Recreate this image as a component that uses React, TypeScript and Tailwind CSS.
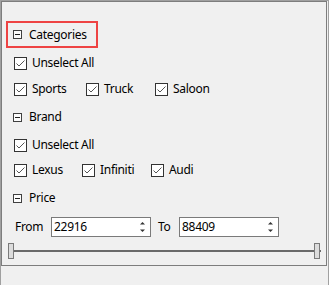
import React from "react";

const font = { fontFamily: '"Noto Sans", "Open Sans", sans-serif' };

function Minus() {
  return (
    <div className="w-[9px] h-[9px] border border-[#404040] bg-[#fcfcfc] flex items-center justify-center shrink-0">
      <div className="w-[5px] h-[1px] bg-[#202020]" />
    </div>
  );
}

function Check() {
  return (
    <div className="w-[13px] h-[13px] border border-[#333333] bg-white shrink-0 flex items-center justify-center">
      <svg width="11" height="11" viewBox="0 0 11 11">
        <path d="M1.5 5.5 L4 8 L9.5 2.5" stroke="#555" strokeWidth="1" fill="none" />
      </svg>
    </div>
  );
}

const txt = "text-[12px] leading-none text-black tracking-[-0.3px]";

function Header({ label, boxed, h }: { label: string; boxed?: boolean; h: string }) {
  return (
    <div className={`flex items-center ${h}`}>
      <div
        className={`ml-[4px] w-[92px] h-[27px] border-2 ${boxed ? "border-[#ee4343]" : "border-transparent"} flex items-center pl-[5px] gap-[7px]`}
      >
        <Minus />
        <span className={txt}>{label}</span>
      </div>
    </div>
  );
}

function Item({ label, w }: { label: string; w?: string }) {
  return (
    <div className={`flex items-center gap-[5px] ${w ?? ""}`}>
      <Check />
      <span className={txt}>{label}</span>
    </div>
  );
}

function Spin({ value }: { value: string }) {
  return (
    <div className="w-[100px] h-[20px] border border-[#7a7a7a] bg-white flex items-center justify-between pl-[2px] pr-[4px]">
      <span className={txt}>{value}</span>
      <svg width="7" height="14" viewBox="0 0 7 14">
        <path d="M1 4.5 L3.5 2 L6 4.5 Z" fill="#333" />
        <path d="M1 9.5 L3.5 12 L6 9.5 Z" fill="#333" />
      </svg>
    </div>
  );
}

export default function App() {
  return (
    <div className="w-[329px] h-[285px] bg-[#f0f0f0] border-l border-r border-t border-[#a0a0a0]" style={font}>
      <div className="w-[326px] h-[265px] border border-[#7d7d7d] flex flex-col">
        <div className="h-[19px]" />
        <Header label="Categories" boxed h="h-[27px]" />
        <div className="h-[30px] flex items-center pl-[12px]">
          <Item label="Unselect All" />
        </div>
        <div className="h-[22px] flex items-center pl-[12px]">
          <Item label="Sports" w="w-[72px]" />
          <Item label="Truck" w="w-[69px]" />
          <Item label="Saloon" />
        </div>
        <Header label="Brand" h="h-[34px]" />
        <div className="h-[22px] flex items-center pl-[12px]">
          <Item label="Unselect All" />
        </div>
        <div className="h-[28px] flex items-center pl-[12px]">
          <Item label="Lexus" w="w-[68px]" />
          <Item label="Infiniti" w="w-[69px]" />
          <Item label="Audi" />
        </div>
        <Header label="Price" h="h-[28px]" />
        <div className="h-[30px] flex items-center pl-[13px]">
          <span className={`${txt} w-[36px]`}>From</span>
          <Spin value="22916" />
          <span className={`${txt} ml-[7px] w-[21px]`}>To</span>
          <Spin value="88409" />
        </div>
        <div className="h-[18px] relative ml-[6px] w-[313px]">
          <div className="absolute left-[2px] right-0 top-[8px] h-[2px] bg-[#6a6a6a]" />
          <div className="absolute left-0 top-[1px] w-[6px] h-[16px] border border-[#7a7a7a] bg-[#dcdcdc]" />
          <div className="absolute left-[306px] top-[1px] w-[6px] h-[16px] border border-[#7a7a7a] bg-[#dcdcdc]" />
        </div>
      </div>
    </div>
  );
}
